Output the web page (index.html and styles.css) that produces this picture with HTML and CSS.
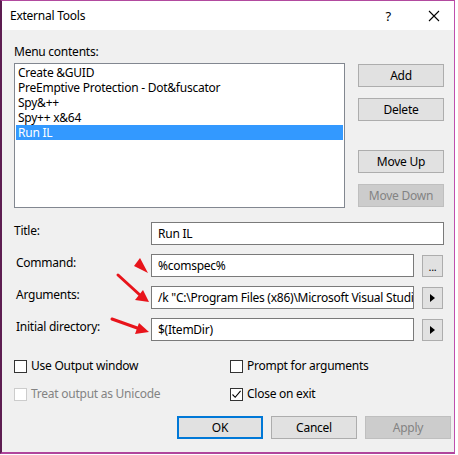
FILE: index.html
```html
<!DOCTYPE html>
<html>
<head>
<meta charset="utf-8">
<link rel="stylesheet" href="styles.css">
</head>
<body>
<div class="window">
  <div class="titlebar">
    <span class="title">External Tools</span>
    <span class="help">?</span>
    <svg class="close" width="12" height="12" viewBox="0 0 12 12"><path d="M1 1L11 11M11 1L1 11" stroke="#000" stroke-width="1.1" fill="none"/></svg>
  </div>
  <div class="body">
    <div class="menu-label">Menu contents:</div>
    <div class="menu-row">
      <div class="listbox">
        <div class="item">Create &amp;GUID</div>
        <div class="item">PreEmptive Protection - Dot&amp;fuscator</div>
        <div class="item">Spy&amp;++</div>
        <div class="item">Spy++ x&amp;64</div>
        <div class="item selected">Run IL</div>
      </div>
      <div class="side-buttons">
        <div class="btn">Add</div>
        <div class="btn">Delete</div>
        <div class="btn gap-top">Move Up</div>
        <div class="btn disabled">Move Down</div>
      </div>
    </div>
    <div class="fields">
      <div class="label first">Title:</div>
      <div class="input span2">Run IL</div>

      <div class="label">Command:</div>
      <div class="input">%comspec%</div>
      <div class="sbtn dots">...</div>

      <div class="label">Arguments:</div>
      <div class="input">/k "C:\Program Files (x86)\Microsoft Visual Studio 14.0\Common7\Tools\VsDevCmd.bat"</div>
      <div class="sbtn"><svg width="5" height="8" viewBox="0 0 5 8"><path d="M0 0L5 4L0 8Z" fill="#000"/></svg></div>

      <div class="label">Initial directory:</div>
      <div class="input">$(ItemDir)</div>
      <div class="sbtn"><svg width="5" height="8" viewBox="0 0 5 8"><path d="M0 0L5 4L0 8Z" fill="#000"/></svg></div>
    </div>
    <div class="checks">
      <div class="check"><span class="box"></span>Use Output window</div>
      <div class="check"><span class="box"></span>Prompt for arguments</div>
      <div class="check disabled"><span class="box"></span>Treat output as Unicode</div>
      <div class="check"><span class="box"><svg width="11" height="11" viewBox="0 0 11 11"><path d="M1.5 5.5L4.2 8.3L9.6 1.8" stroke="#000" stroke-width="1.1" fill="none"/></svg></span>Close on exit</div>
    </div>
    <div class="actions">
      <div class="btn default">OK</div>
      <div class="btn">Cancel</div>
      <div class="btn disabled">Apply</div>
    </div>
  </div>
  <svg class="annotations" width="455" height="454" viewBox="0 0 455 454">
    <polygon points="140,258 134,266 148,273" fill="#e8141b"/>
    <line x1="118" y1="275" x2="141" y2="296" stroke="#e8141b" stroke-width="3" stroke-linecap="round"/>
    <polygon points="149,302 135,300 143,290" fill="#e8141b"/>
    <line x1="112" y1="319" x2="140" y2="329" stroke="#e8141b" stroke-width="3" stroke-linecap="round"/>
    <polygon points="149,332 135,334 139,323" fill="#e8141b"/>
  </svg>
</div>
</body>
</html>
```

FILE: styles.css
```css
* { box-sizing: border-box; }
html, body { margin: 0; padding: 0; background: #fff; }
body {
  width: 458px;
  height: 455px;
  font-family: "Noto Sans", "Open Sans", sans-serif;
  font-size: 12px;
  letter-spacing: -0.25px;
  color: #000;
  overflow: hidden;
}
.window {
  position: relative;
  width: 455px;
  height: 454px;
  border-top: 1px solid #b24a9f;
  border-right: 1px solid #c04fae;
  border-bottom: 2px solid #b0459c;
  border-left: 2px solid #5d1d51;
  background: #f0f0f0;
  display: flex;
  flex-direction: column;
}
.titlebar {
  height: 29px;
  background: #fff;
  display: flex;
  align-items: center;
  padding-left: 8px;
}
.title { flex: 1; font-size: 12px; padding-bottom: 1px; }
.help { font-size: 13px; margin-right: 37px; }
.close { margin-right: 14px; }
.body {
  flex: 1;
  padding: 0 3px 0 12px;
  display: flex;
  flex-direction: column;
}
.menu-label { margin-top: 14px; height: 16px; line-height: 16px; }
.menu-row {
  margin-top: 3px;
  margin-right: 7px;
  display: flex;
  justify-content: space-between;
}
.listbox {
  width: 331px;
  height: 145px;
  background: #fff;
  border: 1px solid #828790;
  padding: 1px;
}
.item {
  height: 15px;
  line-height: 15px;
  padding-left: 2px;
  white-space: nowrap;
}
.item.selected { background: #3399ff; color: #fff; }
.side-buttons {
  display: flex;
  flex-direction: column;
  padding-top: 1px;
  gap: 11px;
}
.btn {
  width: 86px;
  height: 23px;
  line-height: 21px;
  text-align: center;
  background: #e1e1e1;
  border: 1px solid #adadad;
}
.btn.disabled { background: #cccccc; border-color: #bfbfbf; color: #838383; }
.btn.gap-top { margin-top: 18px; }
.btn.default { border: 2px solid #0078d7; line-height: 19px; }
.fields {
  margin-top: 14px;
  margin-right: 6px;
  display: grid;
  grid-template-columns: 129px 263px 22px;
  column-gap: 8px;
  row-gap: 9px;
}
.label { line-height: 16px; padding-top: 1px; padding-left: 2px; white-space: nowrap; }
.label.first { padding-left: 0; }
.input {
  height: 23px;
  background: #fff;
  border: 1px solid #7a7a7a;
  padding-left: 6px;
  line-height: 21px;
  white-space: nowrap;
  overflow: hidden;
}
.input.span2 { grid-column: span 2; }
.sbtn {
  width: 21px;
  height: 22px;
  margin-top: 1px;
  background: #e1e1e1;
  border: 1px solid #adadad;
  display: flex;
  align-items: center;
  justify-content: center;
}
.sbtn.dots { align-items: flex-end; font-size: 11px; line-height: 14px; padding-bottom: 2px; }
.checks {
  margin-top: 17px;
  display: grid;
  grid-template-columns: 216px 1fr;
  row-gap: 12px;
}
.check { display: flex; align-items: center; height: 16px; line-height: 16px; white-space: nowrap; }
.box {
  width: 13px;
  height: 13px;
  border: 1px solid #333;
  background: #fff;
  margin-right: 4px;
  display: flex;
  align-items: center;
  justify-content: center;
  flex: none;
}
.check.disabled { color: #838383; }
.check.disabled .box { border-color: #cccccc; }
.actions {
  margin-top: 14px;
  display: flex;
  justify-content: flex-end;
  gap: 8px;
}
.annotations { position: absolute; left: -2px; top: -1px; pointer-events: none; }
```
